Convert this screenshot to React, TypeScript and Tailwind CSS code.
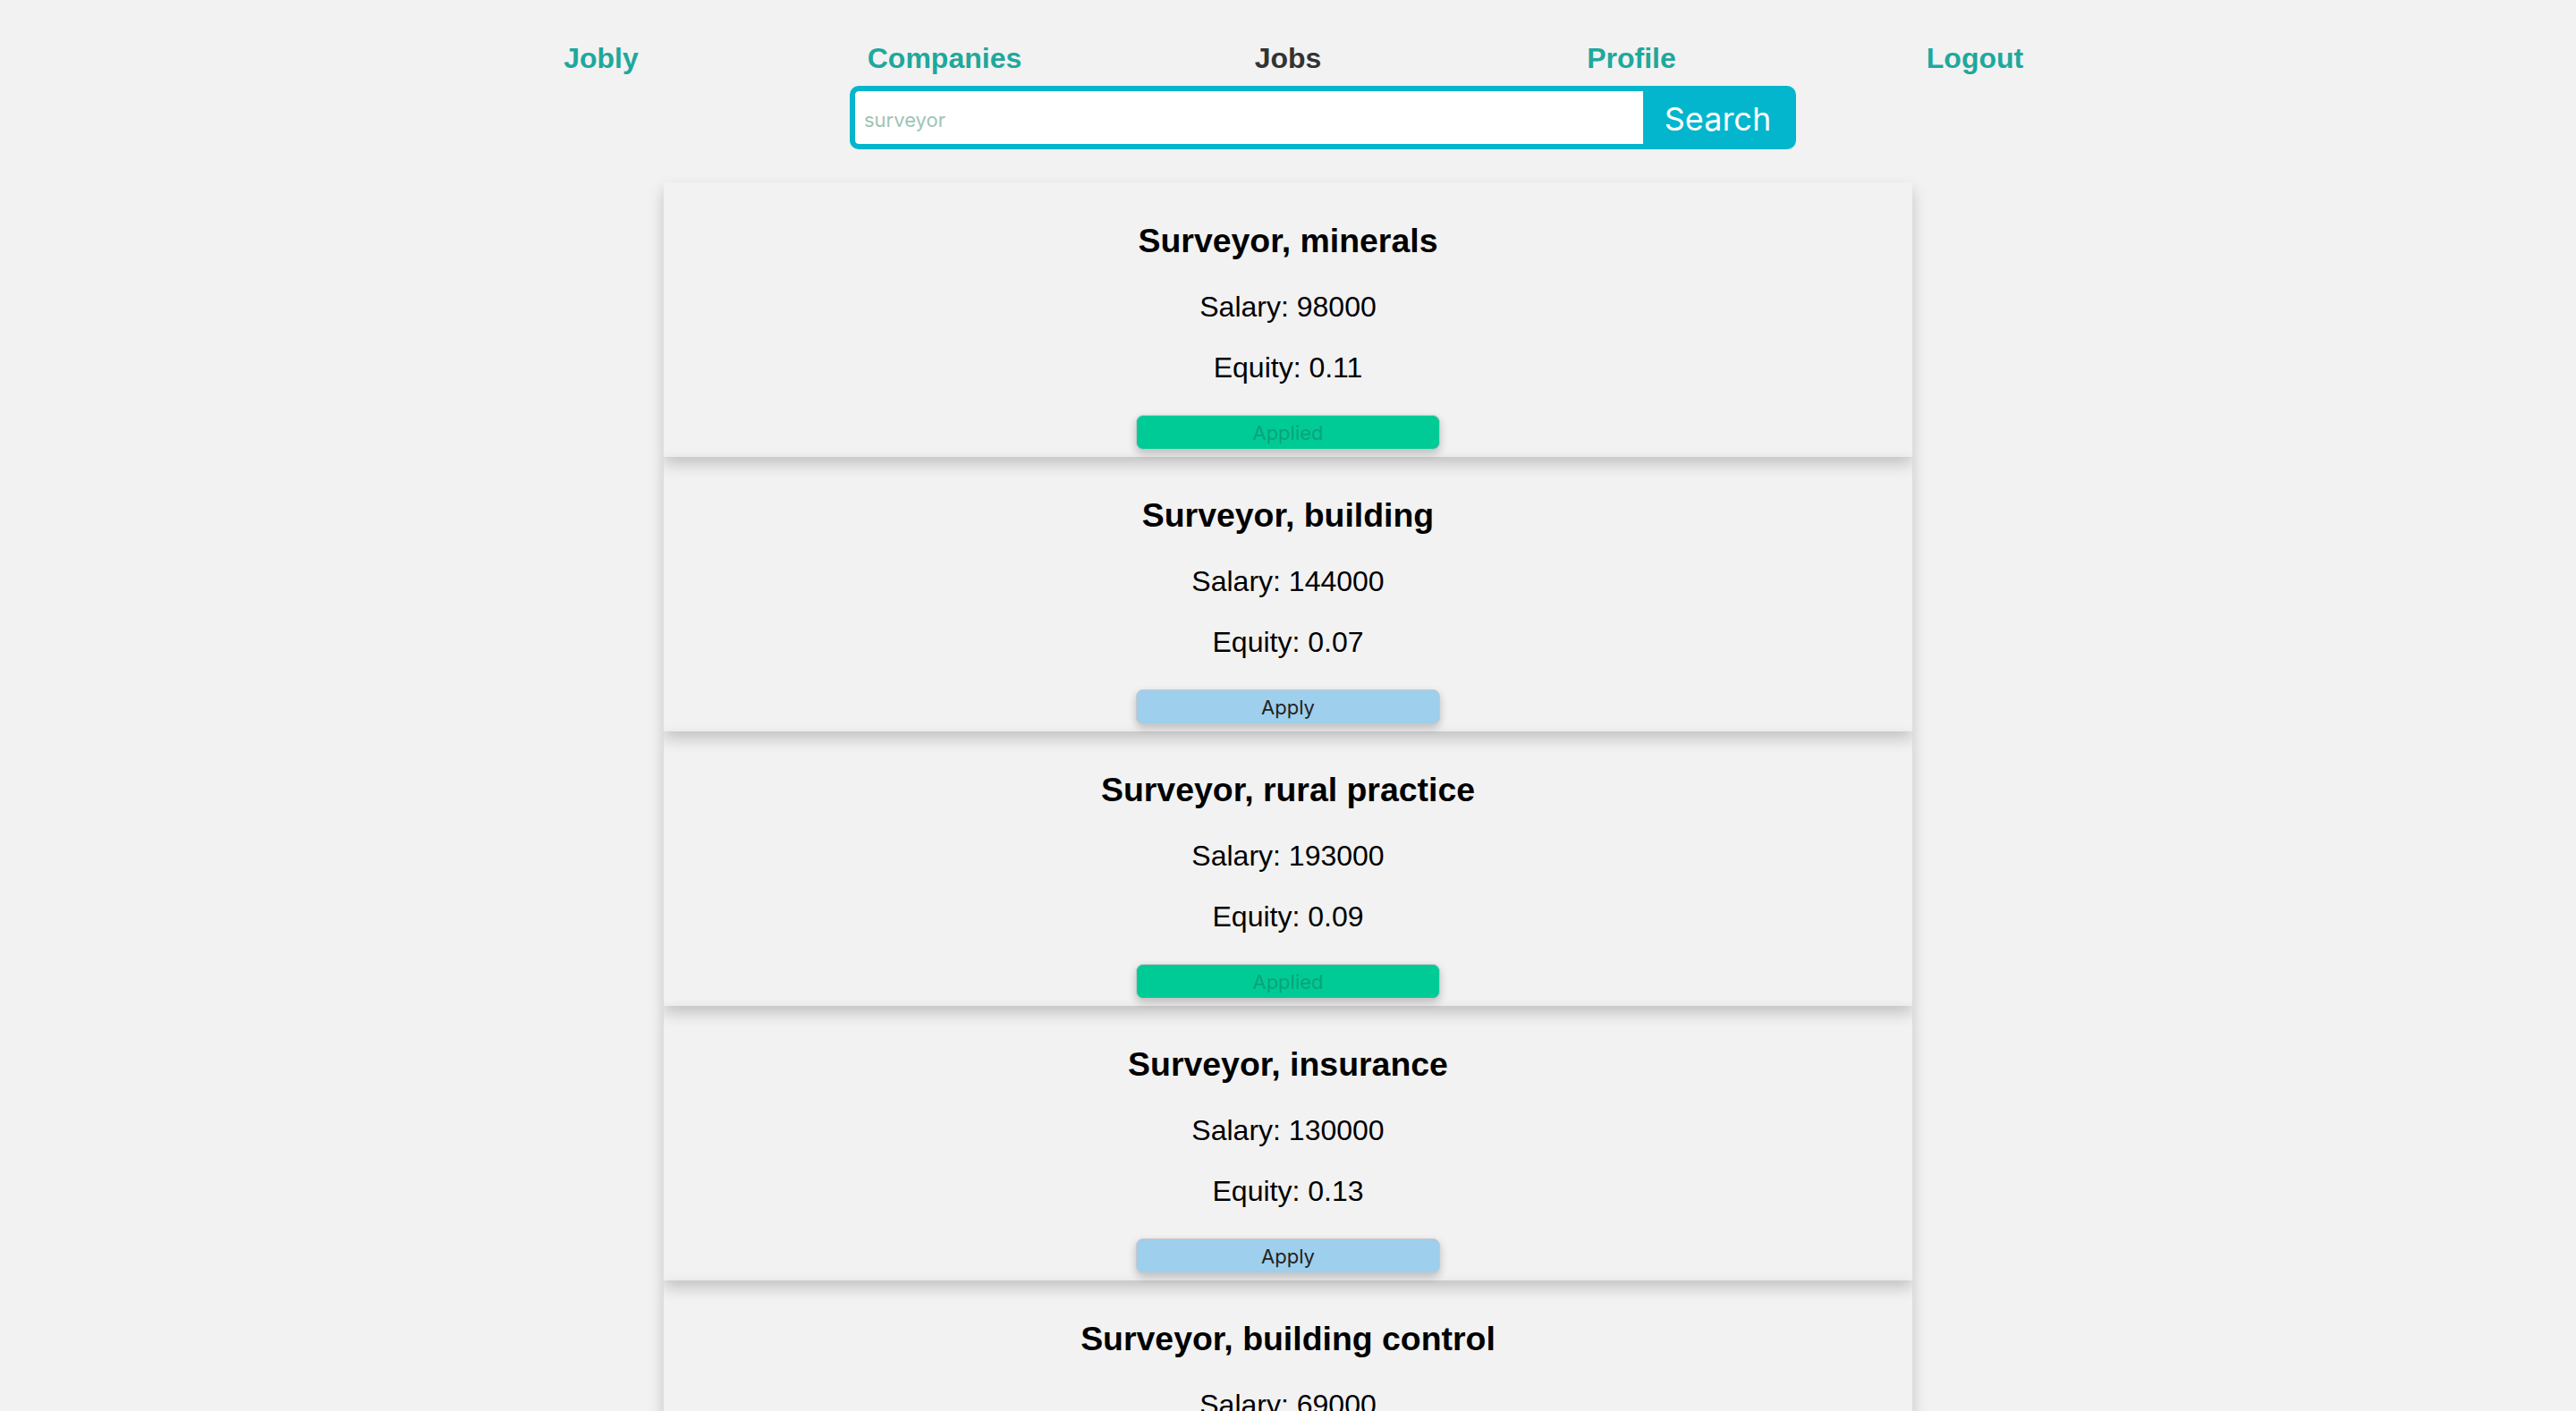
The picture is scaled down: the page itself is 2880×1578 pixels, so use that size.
const jobs = [
  { title: "Surveyor, minerals", salary: 98000, equity: "0.11", applied: true },
  { title: "Surveyor, building", salary: 144000, equity: "0.07", applied: false },
  { title: "Surveyor, rural practice", salary: 193000, equity: "0.09", applied: true },
  { title: "Surveyor, insurance", salary: 130000, equity: "0.13", applied: false },
  { title: "Surveyor, building control", salary: 69000, equity: "0.04", applied: false },
];

function NavBar() {
  const links = ["Jobly", "Companies", "Jobs", "Profile", "Logout"];
  return (
    <nav className="mx-auto grid w-[1920px] grid-cols-5 pt-[47px] text-center">
      {links.map((l) => (
        <a
          key={l}
          href="#"
          className={
            "text-[32px] font-bold leading-[37px] " +
            (l === "Jobs" ? "text-[#333333]" : "text-[#1fa89c]")
          }
        >
          {l}
        </a>
      ))}
    </nav>
  );
}

function SearchForm() {
  return (
    <div className="mt-[12px] pl-[950px]">
      <form className="flex h-[71px] w-[1058px] overflow-hidden rounded-[10px] border-[6px] border-[#03b6cd] bg-[#03b6cd]">
        <input
          className="w-[881px] rounded-l-[4px] bg-white px-[10px] pt-[5px] font-['Inter',sans-serif] text-[22px] text-[#333] outline-none placeholder:text-[#9fc4b4]"
          placeholder="surveyor"
        />
        <button
          type="button"
          className="flex-1 pl-[2px] pt-[2px] font-['Inter',sans-serif] text-[36px] leading-none text-white"
        >
          Search
        </button>
      </form>
    </div>
  );
}

function JobCard({ job }: { job: (typeof jobs)[number] }) {
  return (
    <div className="flex flex-col items-center pt-[43px] pb-[8px] shadow-[0_8px_16px_0_rgba(0,0,0,0.2)]">
      <h3 className="text-[37.44px] font-bold leading-[44px] text-black">{job.title}</h3>
      <p className="mt-[34px] text-[32px] leading-[37px] text-black">Salary: {job.salary}</p>
      <p className="mt-[31px] text-[32px] leading-[37px] text-black">Equity: {job.equity}</p>
      {job.applied ? (
        <button
          disabled
          className="mt-[34px] h-[39px] w-[340px] rounded-[8px] border border-[#c9c9c9] bg-[#00cb96] pt-[2px] font-['Inter',sans-serif] text-[22px] text-[#0aa37a] shadow-[0_4px_10px_rgba(0,0,0,0.22)]"
        >
          Applied
        </button>
      ) : (
        <button className="mt-[34px] h-[39px] w-[340px] rounded-[8px] border border-[#c9c9c9] bg-[#9ecfec] pt-[2px] font-['Inter',sans-serif] text-[22px] text-[#222] shadow-[0_4px_10px_rgba(0,0,0,0.22)]">
          Apply
        </button>
      )}
    </div>
  );
}

export default function App() {
  return (
    <div className="min-h-screen bg-[#f2f2f2] font-['Liberation_Sans',Arial,sans-serif]">
      <NavBar />
      <SearchForm />
      <div className="mx-auto mt-[37px] flex w-[1396px] flex-col">
        {jobs.map((j) => (
          <JobCard key={j.title} job={j} />
        ))}
      </div>
    </div>
  );
}
